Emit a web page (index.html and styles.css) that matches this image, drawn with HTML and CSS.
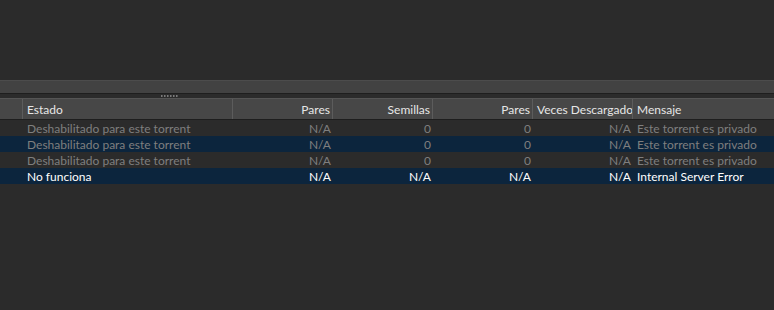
FILE: index.html
```html
<!DOCTYPE html>
<html lang="es">
<head>
    <meta charset="UTF-8">
    <title>Trackers</title>
    <link rel="stylesheet" href="styles.css">
</head>
<body>
    <div class="top-area"></div>
    <div class="toolbar-band"></div>
    <div class="splitter">
        <span></span><span></span><span></span><span></span><span></span><span></span>
    </div>
    <div class="tracker-list">
        <div class="row head">
            <div class="cell"></div>
            <div class="cell">Estado</div>
            <div class="cell num">Pares</div>
            <div class="cell num">Semillas</div>
            <div class="cell num">Pares</div>
            <div class="cell num">Veces Descargado</div>
            <div class="cell">Mensaje</div>
        </div>
        <div class="row off">
            <div class="cell"></div>
            <div class="cell">Deshabilitado para este torrent</div>
            <div class="cell num">N/A</div>
            <div class="cell num">0</div>
            <div class="cell num">0</div>
            <div class="cell num">N/A</div>
            <div class="cell">Este torrent es privado</div>
        </div>
        <div class="row off alt">
            <div class="cell"></div>
            <div class="cell">Deshabilitado para este torrent</div>
            <div class="cell num">N/A</div>
            <div class="cell num">0</div>
            <div class="cell num">0</div>
            <div class="cell num">N/A</div>
            <div class="cell">Este torrent es privado</div>
        </div>
        <div class="row off">
            <div class="cell"></div>
            <div class="cell">Deshabilitado para este torrent</div>
            <div class="cell num">N/A</div>
            <div class="cell num">0</div>
            <div class="cell num">0</div>
            <div class="cell num">N/A</div>
            <div class="cell">Este torrent es privado</div>
        </div>
        <div class="row alt">
            <div class="cell"></div>
            <div class="cell">No funciona</div>
            <div class="cell num">N/A</div>
            <div class="cell num">N/A</div>
            <div class="cell num">N/A</div>
            <div class="cell num">N/A</div>
            <div class="cell">Internal Server Error</div>
        </div>
    </div>
</body>
</html>
```

FILE: styles.css
```css
body {
    margin: 0;
    background-color: #2b2b2b;
    font-family: 'Lato', 'Noto Sans', sans-serif;
    font-size: 12px;
    color: #e6e6e6;
}
.top-area {
    height: 80px;
}
.toolbar-band {
    height: 12px;
    background-color: #424242;
    border-top: 1px solid #4c4c4c;
    border-bottom: 1px solid #1e1e1e;
}
.splitter {
    height: 4px;
    display: flex;
    align-items: center;
    gap: 1px;
    padding-left: 161px;
}
.splitter span {
    width: 1px;
    height: 2px;
    background-color: #7a7a7a;
    border-right: 1px solid #555;
}
.tracker-list {
    border-top: 1px solid #555;
}
.row {
    display: grid;
    grid-template-columns: 23px 210px 100px 100px 100px 100px 1fr;
    height: 16px;
    line-height: 16px;
}
.row.head {
    height: 20px;
    line-height: 20px;
    background-color: #474747;
    border-bottom: 1px solid #1e1e1e;
}
.row.head .cell {
    border-right: 1px solid #5c5c5c;
    padding-top: 2px;
    line-height: 18px;
}
.row.head .cell:last-child {
    border-right: none;
}
.cell {
    padding: 1px 3px 0 4px;
    line-height: 15px;
    white-space: nowrap;
    overflow: hidden;
}
.cell.num {
    text-align: right;
    padding-right: 2px;
}
.row.alt {
    background-color: #0c253d;
}
.row:not(.head) {
    color: #ffffff;
}
.row.off:not(.head) {
    color: #7f7f7f;
}
```
